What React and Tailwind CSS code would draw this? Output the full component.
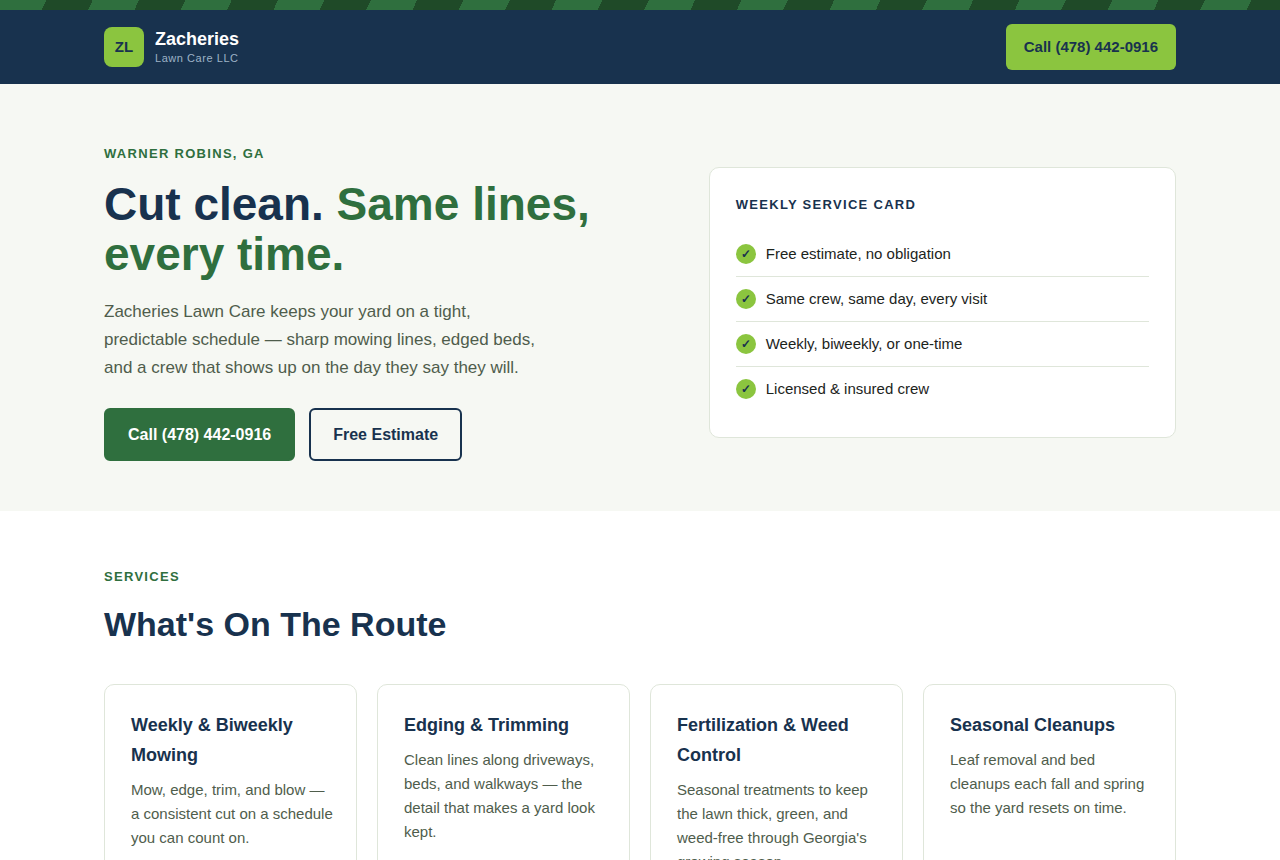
const PHONE = '(478) 442-0916';
const PHONE_HREF = 'tel:4784420916';

const perks = [
    'Free estimate, no obligation',
    'Same crew, same day, every visit',
    'Weekly, biweekly, or one-time',
    'Licensed & insured crew'
];

const services = [
    {
        title: 'Weekly & Biweekly Mowing',
        text: 'Mow, edge, trim, and blow — a consistent cut on a schedule you can count on.'
    },
    {
        title: 'Edging & Trimming',
        text: 'Clean lines along driveways, beds, and walkways — the detail that makes a yard look kept.'
    },
    {
        title: 'Fertilization & Weed Control',
        text: "Seasonal treatments to keep the lawn thick, green, and weed-free through Georgia's growing season."
    },
    {
        title: 'Seasonal Cleanups',
        text: 'Leaf removal and bed cleanups each fall and spring so the yard resets on time.'
    }
];

function Eyebrow({ children }) {
    return (
        <p className="text-[13px] leading-5 font-bold uppercase tracking-widest text-[#2f6f3e]">
            {children}
        </p>
    );
}

function Header() {
    return (
        <header className="bg-[#18324e]">
            <div className="max-w-[1120px] mx-auto px-6 py-[14px] flex items-center justify-between">
                <a href="#top" className="flex items-center gap-[11px]">
                    <span className="size-10 rounded-lg bg-[#8bc53f] text-[#18324e] text-[15px] font-bold flex items-center justify-center">
                        ZL
                    </span>
                    <span className="flex flex-col">
                        <span className="text-lg leading-[22px] font-bold text-white">Zacheries</span>
                        <span className="text-[11px] leading-4 tracking-wider text-[#9db2c6]">Lawn Care LLC</span>
                    </span>
                </a>
                <a
                    href={PHONE_HREF}
                    className="rounded-md bg-[#8bc53f] px-[18px] py-[11px] text-[15px] leading-6 font-bold text-[#18324e]"
                >
                    Call {PHONE}
                </a>
            </div>
        </header>
    );
}

function ServiceCard() {
    return (
        <aside className="rounded-[10px] border border-[#dfe6da] bg-white p-[26px]">
            <h2 className="mb-4 text-[13px] leading-[22px] font-bold uppercase tracking-widest text-[#18324e]">
                Weekly Service Card
            </h2>
            <ul>
                {perks.map(perk => (
                    <li
                        key={perk}
                        className="flex items-center gap-[10px] border-b border-[#dfe6da] py-[10px] text-[15px] leading-6 text-[#1c241c] last:border-b-0"
                    >
                        <span className="size-5 shrink-0 rounded-full bg-[#8bc53f] text-xs font-bold text-[#18324e] flex items-center justify-center">
                            ✓
                        </span>
                        {perk}
                    </li>
                ))}
            </ul>
        </aside>
    );
}

function Hero() {
    return (
        <section className="bg-[#f6f8f3]">
            <div className="max-w-[1120px] mx-auto px-6 pt-[60px] pb-[50px] grid md:grid-cols-[6fr_5fr] gap-11 items-center">
                <div>
                    <Eyebrow>Warner Robins, GA</Eyebrow>
                    <h1 className="mt-[15px] text-[46px] leading-[50px] font-bold text-[#18324e]">
                        Cut clean. <span className="text-[#2f6f3e]">Same lines, every time.</span>
                    </h1>
                    <p className="mt-[19px] max-w-[440px] text-[17px] leading-7 text-[#4f5d4c]">
                        Zacheries Lawn Care keeps your yard on a tight, predictable schedule — sharp
                        mowing lines, edged beds, and a crew that shows up on the day they say they will.
                    </p>
                    <div className="mt-[26px] flex flex-wrap gap-[14px]">
                        <a
                            href={PHONE_HREF}
                            className="rounded-md border-2 border-[#2f6f3e] bg-[#2f6f3e] px-[22px] py-3 text-base leading-[25px] font-bold text-white"
                        >
                            Call {PHONE}
                        </a>
                        <a
                            href="#estimate"
                            className="rounded-md border-2 border-[#18324e] px-[22px] py-3 text-base leading-[25px] font-bold text-[#18324e]"
                        >
                            Free Estimate
                        </a>
                    </div>
                </div>
                <ServiceCard />
            </div>
        </section>
    );
}

function Services() {
    return (
        <section className="bg-white">
            <div className="max-w-[1120px] mx-auto px-6 py-14">
                <Eyebrow>Services</Eyebrow>
                <h2 className="mt-[9px] mb-8 text-[34px] leading-[56px] font-bold text-[#18324e]">
                    What's On The Route
                </h2>
                <div className="grid sm:grid-cols-2 lg:grid-cols-4 gap-5">
                    {services.map(service => (
                        <article key={service.title} className="rounded-[10px] border border-[#dfe6da] py-[25px] pl-[26px] pr-[22px]">
                            <h3 className="mb-2 text-lg leading-[30px] font-bold text-[#18324e]">{service.title}</h3>
                            <p className="text-[15px] leading-6 text-[#4f5d4c]">{service.text}</p>
                        </article>
                    ))}
                </div>
            </div>
        </section>
    );
}

export default function App() {
    return (
        <div id="top" className="font-['Liberation_Sans',Arial,sans-serif]">
            {/* Mowing stripes */}
            <div className="h-[10px] bg-[repeating-linear-gradient(115deg,#2f6f3e_0_42px,#1f4a28_42px_84px)]" />
            <Header />
            <main>
                <Hero />
                <Services />
            </main>
        </div>
    );
}
